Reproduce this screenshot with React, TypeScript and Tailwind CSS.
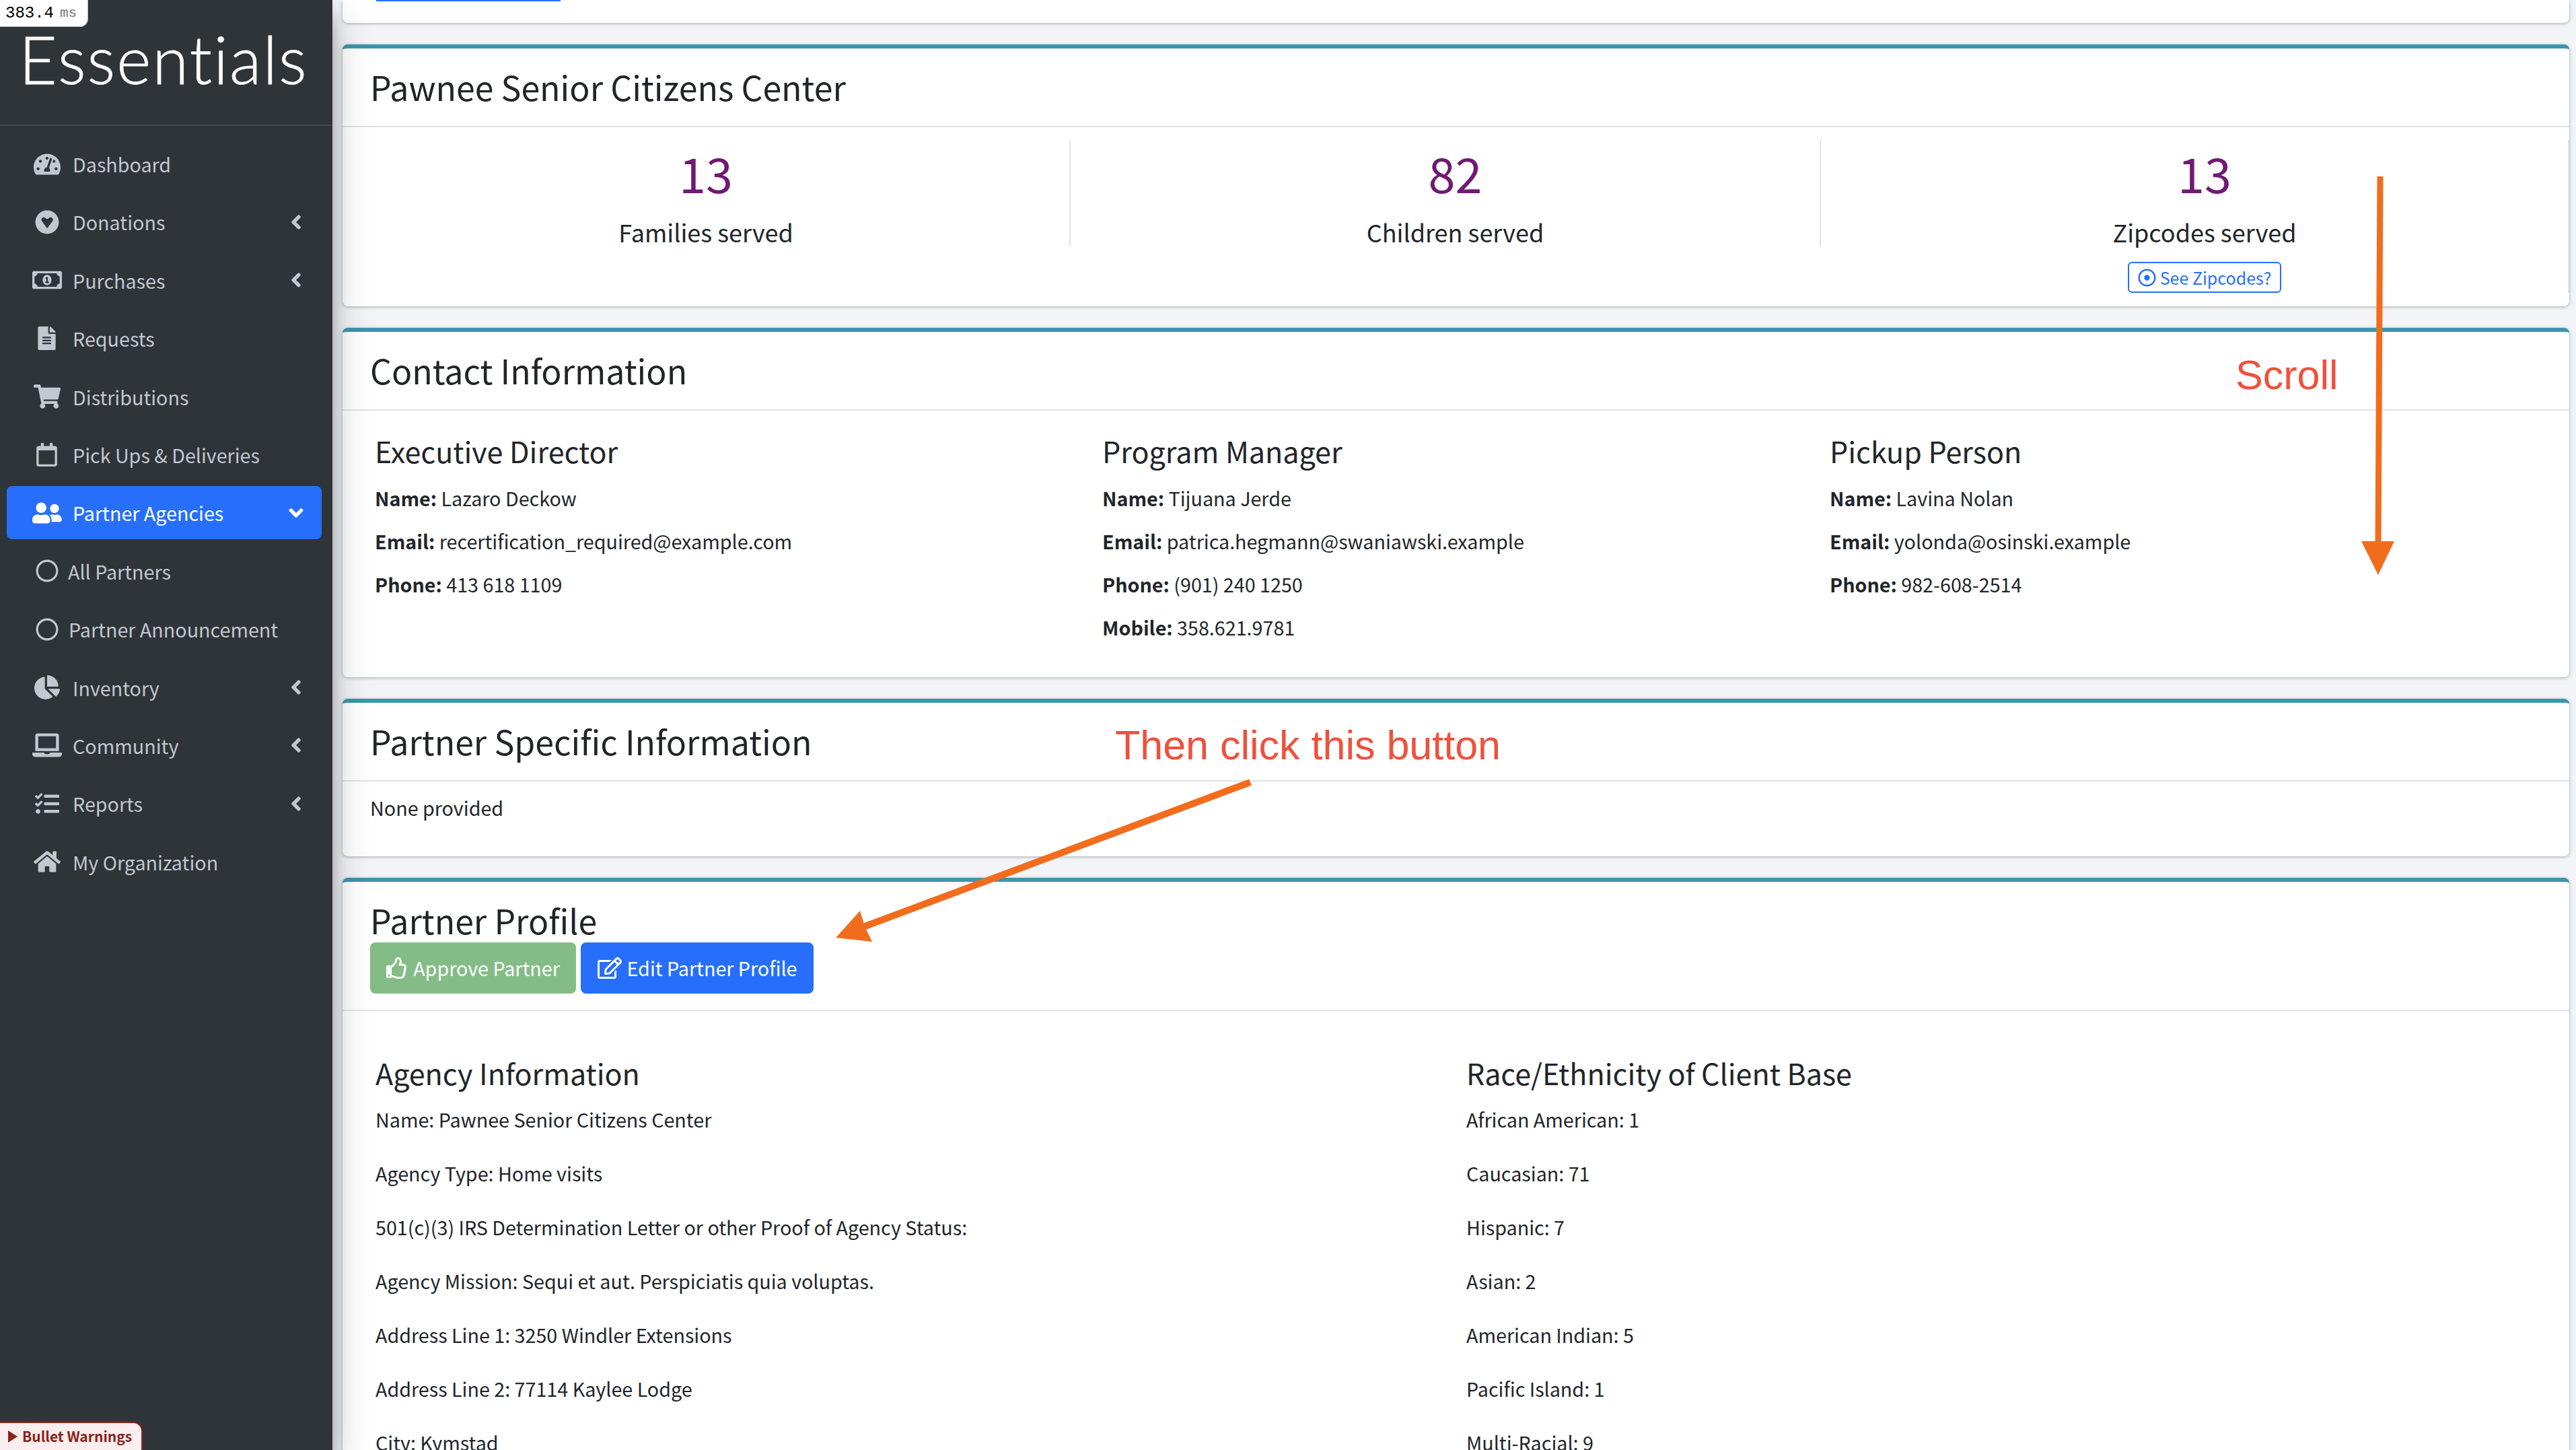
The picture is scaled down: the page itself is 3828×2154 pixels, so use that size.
import React from 'react';
import {
  FaTachometerAlt, FaGratipay, FaRegMoneyBillAlt, FaFileAlt, FaShoppingCart, FaRegCalendar, FaUserFriends,
  FaRegCircle, FaChartPie, FaLaptop, FaTasks, FaHome, FaAngleLeft, FaAngleDown, FaRegThumbsUp, FaRegEdit, FaRegDotCircle,
} from 'react-icons/fa';

const navItems = [
  { label: 'Dashboard', icon: <FaTachometerAlt size={40} /> },
  { label: 'Donations', icon: <FaGratipay size={36} />, more: true },
  { label: 'Purchases', icon: <FaRegMoneyBillAlt size={44} />, more: true },
  { label: 'Requests', icon: <FaFileAlt size={35} /> },
  { label: 'Distributions', icon: <FaShoppingCart size={40} /> },
  { label: 'Pick Ups & Deliveries', icon: <FaRegCalendar size={35} /> },
  { label: 'Partner Agencies', icon: <FaUserFriends size={44} />, active: true },
  { label: 'All Partners', icon: <FaRegCircle size={34} />, sub: 'w-[91px]' },
  { label: 'Partner Announcement', icon: <FaRegCircle size={34} />, sub: 'w-[92px]' },
  { label: 'Inventory', icon: <FaChartPie size={38} />, more: true },
  { label: 'Community', icon: <FaLaptop size={44} />, more: true },
  { label: 'Reports', icon: <FaTasks size={36} />, more: true },
  { label: 'My Organization', icon: <FaHome size={40} /> },
];

const contacts = [
  {
    title: 'Executive Director',
    rows: [['Name:', 'Lazaro Deckow'], ['Email:', 'recertification_required@example.com'], ['Phone:', '413 618 1109']],
  },
  {
    title: 'Program Manager',
    rows: [['Name:', 'Tijuana Jerde'], ['Email:', 'patrica.hegmann@swaniawski.example'], ['Phone:', '(901) 240 1250'], ['Mobile:', '358.621.9781']],
  },
  {
    title: 'Pickup Person',
    rows: [['Name:', 'Lavina Nolan'], ['Email:', 'yolonda@osinski.example'], ['Phone:', '982-608-2514']],
  },
];

const agencyRows = [
  'Name: Pawnee Senior Citizens Center',
  'Agency Type: Home visits',
  '501(c)(3) IRS Determination Letter or other Proof of Agency Status:',
  'Agency Mission: Sequi et aut. Perspiciatis quia voluptas.',
  'Address Line 1: 3250 Windler Extensions',
  'Address Line 2: 77114 Kaylee Lodge',
  'City: Kymstad',
];

const raceRows = [
  'African American: 1',
  'Caucasian: 71',
  'Hispanic: 7',
  'Asian: 2',
  'American Indian: 5',
  'Pacific Island: 1',
  'Multi-Racial: 9',
];

function Card({ title, children, className }: { title?: React.ReactNode; children: React.ReactNode; className?: string }) {
  return (
    <section className={`mb-[32px] rounded-[8px] border-t-[6px] border-[#3c95ae] bg-white shadow-[0_1px_5px_rgba(0,0,0,0.3)] ${className ?? ''}`}>
      {title}
      {children}
    </section>
  );
}

function CardTitle({ children }: { children: string }) {
  return (
    <div className="flex h-[117px] items-center border-b-2 border-[#e2e3e5] pb-[3px] pl-[41px] text-[50px] leading-[66px] text-[#212529]">
      {children}
    </div>
  );
}

function Stat({ value, label, className, children }: { value: string; label: string; className: string; children?: React.ReactNode }) {
  return (
    <div className={`flex flex-col items-center border-r-2 border-[#e2e3e5] ${className}`}>
      <div className="text-[72px] leading-[95px] text-[#6f1a73]">{value}</div>
      <div className="mt-[18px] text-[36px] leading-[47px] text-[#212529]">{label}</div>
      {children}
    </div>
  );
}

export default function App() {
  return (
    <div className="relative flex h-[2154px] w-[3828px] overflow-hidden bg-[#f2f4f8] text-[28.7px] text-[#212529] [font-family:'Noto_Sans_CJK_SC','Noto_Sans',sans-serif]">
      <aside className="relative z-10 h-full w-[494px] shrink-0 bg-[#2f3439] shadow-[0_28px_56px_rgba(0,0,0,0.25),0_20px_20px_rgba(0,0,0,0.22)]">
        <div className="h-[187px] border-b-2 border-[#41474d] pl-[28px] pt-[27px] text-[98px] font-light leading-[120px] tracking-[2px] text-[#fafafa] [-webkit-text-stroke:0.8px_#fafafa] [font-family:Lato,sans-serif]">
          Essentials
        </div>
        <nav className="pl-[10px] pr-[16px] pt-[17px]">
          {navItems.map((item) => (
            <div
              key={item.label}
              className={`mb-[7.4px] flex h-[79px] items-center rounded-[8px] ${item.active ? 'bg-[#276ffb] text-white' : 'text-[#c2c7d0]'}`}
            >
              <span className={`flex shrink-0 items-center ${item.sub ?? 'w-[98px]'}`}>
                <span className="ml-[20px] flex w-[79px] shrink-0 justify-center">{item.icon}</span>
              </span>
              <span className="flex-1 leading-[47px]">{item.label}</span>
              {item.more && <FaAngleLeft size={34} className="mr-[21px]" />}
              {item.active && <FaAngleDown size={34} className="mr-[21px]" />}
            </div>
          ))}
        </nav>
      </aside>

      <main className="h-full min-w-0 flex-1 pl-[15px] pr-[10px]">
        <div className="mb-[32px] h-[34px] rounded-b-[8px] bg-white pl-[50px] shadow-[0_1px_5px_rgba(0,0,0,0.3)]">
          <div className="h-[2px] w-[274px] bg-[#276ffb]" />
        </div>

        <Card title={<CardTitle>Pawnee Senior Citizens Center</CardTitle>}>
          <div className="flex h-[266px] items-start pt-[19px]">
            <Stat value="13" label="Families served" className="h-[159px] w-[1082px]" />
            <Stat value="82" label="Children served" className="h-[159px] w-[1115px] pl-[30px]" />
            <Stat value="13" label="Zipcodes served" className="h-[227px] flex-1 pl-[30px]">
              <button className="mt-[21px] flex h-[47px] w-[228px] items-center justify-center gap-[6px] rounded-[6px] border-2 border-[#276ffb] text-[25px] leading-[34px] text-[#276ffb]">
                <FaRegDotCircle size={27} />
                See Zipcodes?
              </button>
            </Stat>
          </div>
        </Card>

        <Card title={<CardTitle>Contact Information</CardTitle>}>
          <div className="flex pb-[34px] pl-[48px] pt-[31px]">
            {contacts.map((c) => (
              <div key={c.title} className="w-[1081px]">
                <h4 className="mb-[18px] text-[43px] leading-[57px]">{c.title}</h4>
                {c.rows.map(([k, v]) => (
                  <p key={k} className="mb-[17px] leading-[47px]">
                    <b className="font-bold">{k}</b> {v}
                  </p>
                ))}
              </div>
            ))}
          </div>
        </Card>

        <Card title={<CardTitle>Partner Specific Information</CardTitle>}>
          <div className="h-[111px] pl-[41px] pt-[15px] leading-[47px]">None provided</div>
        </Card>

        <Card>
          <div className="h-[192px] border-b-2 border-[#e2e3e5] pl-[41px] pt-[23px]">
            <div className="text-[50px] leading-[66px]">Partner Profile</div>
            <div className="mt-[1px] flex gap-[7px]">
              <button className="flex h-[76px] w-[306px] items-center justify-center gap-[8px] rounded-[8px] bg-[#84bc87] text-white">
                <FaRegThumbsUp size={32} />
                Approve Partner
              </button>
              <button className="flex h-[76px] w-[346px] items-center justify-center gap-[8px] rounded-[8px] bg-[#276ffb] text-white">
                <FaRegEdit size={36} />
                Edit Partner Profile
              </button>
            </div>
          </div>
          <div className="flex pl-[49px] pt-[63px]">
            {[['Agency Information', agencyRows], ['Race/Ethnicity of Client Base', raceRows]].map(([title, rows]) => (
              <div key={title as string} className="w-[1621px]">
                <h4 className="mb-[17px] text-[43px] leading-[57px]">{title as string}</h4>
                {(rows as string[]).map((r) => (
                  <p key={r} className="mb-[33px] leading-[47px]">{r}</p>
                ))}
              </div>
            ))}
          </div>
        </Card>
      </main>

      {/* profiler badge + annotations that sit on top of the page */}
      <div className="absolute left-0 top-0 z-20 flex h-[40px] w-[131px] items-center gap-[9px] rounded-br-[12px] border-b border-r border-[#bbb] bg-white pl-[8px] text-black [font-family:'Liberation_Mono',monospace]">
        <span className="text-[24px] leading-[30px]">383.4</span>
        <span className="text-[21px] leading-[30px] text-[#777]">ms</span>
      </div>
      <div className="absolute bottom-0 left-0 z-20 flex h-[42px] w-[212px] items-center gap-[7px] whitespace-nowrap rounded-tr-[14px] border-r-2 border-t-2 border-[#8c2318] bg-[#fbeeee] pl-[12px] text-[21px] font-bold text-[#8c2318]">
        <svg width={14} height={18} viewBox="0 0 14 18"><path d="M0 0 L14 9 L0 18 Z" fill="#8c2318" /></svg>
        Bullet Warnings
      </div>
      <div className="absolute left-[3322px] top-[522px] z-20 text-[61px] leading-[70px] text-[#f0503c] [font-family:'Liberation_Sans',sans-serif]">Scroll</div>
      <div className="absolute left-[1657px] top-[1072px] z-20 text-[61px] leading-[70px] text-[#f0503c] [font-family:'Liberation_Sans',sans-serif]">Then click this button</div>
      <svg className="absolute left-0 top-0 z-20" width={3828} height={2154}>
        <path d="M3537 262 L3534 810" stroke="#f26c1d" strokeWidth={9} fill="none" />
        <path d="M3509 804 L3558 804 L3534 854 Z" fill="#f26c1d" />
        <path d="M1858 1162 L1280 1378" stroke="#f26c1d" strokeWidth={10} fill="none" />
        <path d="M1242 1393 L1278 1353 L1285 1376 L1296 1399 Z" fill="#f26c1d" />
      </svg>
    </div>
  );
}
